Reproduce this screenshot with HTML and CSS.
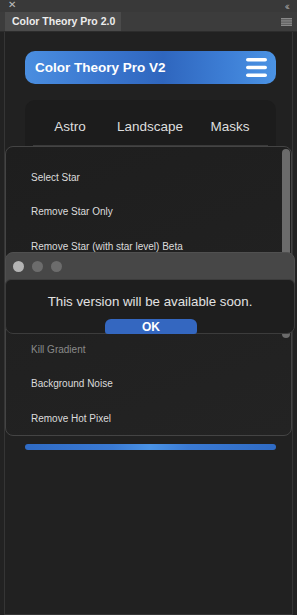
FILE: index.html
```html
<!DOCTYPE html>
<html>
<head>
<meta charset="utf-8">
<link rel="stylesheet" href="styles.css">
</head>
<body>
<div class="topbar">
  <span class="close">&#x2715;</span>
  <span class="collapse">&lsaquo;&lsaquo;</span>
</div>
<div class="tabrow">
  <div class="tab">Color Theory Pro 2.0</div>
  <svg class="flyout" width="11" height="8" viewBox="0 0 11 8"><rect x="0" y="0" width="11" height="1.5" fill="#8a8a8a"/><rect x="0" y="2.2" width="11" height="1.5" fill="#8a8a8a"/><rect x="0" y="4.4" width="11" height="1.5" fill="#8a8a8a"/><rect x="0" y="6.5" width="11" height="1.5" fill="#8a8a8a"/></svg>
</div>
<div class="panel">
  <div class="header">
    <span class="title">Color Theory Pro V2</span>
    <svg class="burger" width="21" height="19" viewBox="0 0 21 19"><rect x="0" y="0" width="21" height="3.6" rx="1.8" fill="#fff"/><rect x="0" y="7.7" width="21" height="3.6" rx="1.8" fill="#fff"/><rect x="0" y="15.4" width="21" height="3.6" rx="1.8" fill="#fff"/></svg>
  </div>
  <div class="card">
    <div class="tabs">
      <span>Astro</span>
      <span>Landscape</span>
      <span>Masks</span>
    </div>
    <div class="underline"></div>
  </div>
  <div class="progress"></div>
</div>

<div class="dropdown">
  <ul class="items">
    <li>Select Star</li>
    <li>Remove Star Only</li>
    <li>Remove Star (with star level) Beta</li>
    <li>Remove Star Halo</li>
    <li>Star Reduction</li>
    <li class="dim">Kill Gradient</li>
    <li>Background Noise</li>
    <li>Remove Hot Pixel</li>
  </ul>
  <div class="thumb"></div>
</div>

<div class="dialog">
  <div class="dlg-title">
    <span class="dot light"></span>
    <span class="dot"></span>
    <span class="dot"></span>
  </div>
  <div class="dlg-body">
    <p class="msg">This version will be available soon.</p>
    <div class="ok">OK</div>
  </div>
</div>
</body>
</html>
```
FILE: styles.css
```css
html, body {
  margin: 0;
  padding: 0;
  background: #222222;
  width: 297px;
  height: 615px;
  overflow: hidden;
  font-family: "Liberation Sans", Arial, sans-serif;
}
body { position: relative; }

.topbar {
  height: 12px;
  background: #393939;
  position: relative;
  color: #bdbdbd;
}
.close {
  position: absolute;
  left: 8px;
  top: -1px;
  font-size: 10px;
  line-height: 12px;
}
.collapse {
  position: absolute;
  right: 9px;
  top: 0;
  font-size: 11px;
  line-height: 12px;
  letter-spacing: -2px;
  color: #a0a0a0;
}

.tabrow {
  height: 19px;
  background: #3c3c3c;
  display: flex;
  align-items: stretch;
  justify-content: space-between;
  padding-left: 5px;
  padding-right: 5px;
  border-bottom: 1px solid #2c2c2c;
}
.tab {
  background: #4b4b4b;
  color: #ededed;
  font-weight: bold;
  font-size: 10.5px;
  line-height: 19px;
  padding: 0 6px 0 7px;
  white-space: nowrap;
}
.flyout { align-self: center; }

.panel {
  margin: 0 4px;
  height: 583px;
  border-left: 1px solid #353535;
  border-right: 1px solid #353535;
  border-bottom: 1px solid #353535;
  background: #212121;
  padding: 19px 16px 0 20px;
  box-sizing: border-box;
}

.header {
  height: 33px;
  border-radius: 10px;
  background: linear-gradient(90deg, #4a8ee0 0%, #3b77cf 30%, #2f66be 55%, #3d7ed5 80%, #4b93e4 100%);
  display: flex;
  align-items: center;
  justify-content: space-between;
  padding: 0 9px 0 10px;
}
.title {
  color: #ffffff;
  font-weight: bold;
  font-size: 13.5px;
}
.burger { display: block; }

.card {
  margin-top: 16px;
  height: 330px;
  background: #1c1c1c;
  border-radius: 10px;
  padding-top: 18px;
  box-sizing: border-box;
}
.tabs {
  display: grid;
  grid-template-columns: 80px 80px 80px;
  justify-items: center;
  color: #dedede;
  font-size: 13.5px;
  line-height: 18px;
  padding-left: 5px;
}
.underline {
  margin: 9px 8px 0 8px;
  height: 2px;
  background: #3a3a3a;
}

.progress {
  margin-top: 14px;
  height: 6px;
  border-radius: 3px;
  background: linear-gradient(90deg, #2f6bc5 0%, #3a7ad4 35%, #4a93e6 50%, #3a7ad4 65%, #2f6bc5 100%);
}

.dropdown {
  position: absolute;
  left: 5px;
  top: 146px;
  width: 287px;
  height: 290px;
  box-sizing: border-box;
  border: 1px solid #444;
  border-radius: 8px;
  background: linear-gradient(160deg, #1e1e1e, #232323);
  overflow: hidden;
}
.items {
  list-style: none;
  margin: 0;
  padding: 23px 0 0 25px;
}
.items li {
  height: 34.4px;
  color: #dcdcdc;
  font-size: 10px;
  line-height: 16px;
}
.items li.dim { color: #8a8a8a; }
.thumb {
  position: absolute;
  right: 1px;
  top: 2px;
  width: 8px;
  height: 189px;
  border-radius: 4px;
  background: #6b6b6b;
}

.dialog {
  position: absolute;
  left: 5px;
  top: 252px;
  width: 290px;
  height: 81px;
  box-sizing: border-box;
  border-radius: 8px;
  background: #474747;
  border: 1px solid #505050;
}
.dlg-title {
  height: 26px;
  display: flex;
  align-items: center;
  gap: 8px;
  padding-left: 7px;
}
.dot {
  width: 11px;
  height: 11px;
  border-radius: 50%;
  background: #6c6c6c;
}
.dot.light { background: #b4b4b4; }
.dlg-body {
  position: relative;
  height: 53px;
  background: #1e1e1e;
  border: 1px solid #3c3c3c;
  border-radius: 6px 6px 8px 8px;
  margin: 0 -1px;
  text-align: center;
}
.msg {
  margin: 0;
  padding-top: 14px;
  color: #e2e2e2;
  font-size: 13.3px;
  line-height: 16px;
}
.ok {
  position: absolute;
  left: 99px;
  bottom: -1px;
  width: 92px;
  height: 15px;
  border-radius: 6px 6px 3px 3px;
  background: #3467c0;
  color: #fff;
  font-weight: bold;
  font-size: 12px;
  line-height: 16px;
}
```
